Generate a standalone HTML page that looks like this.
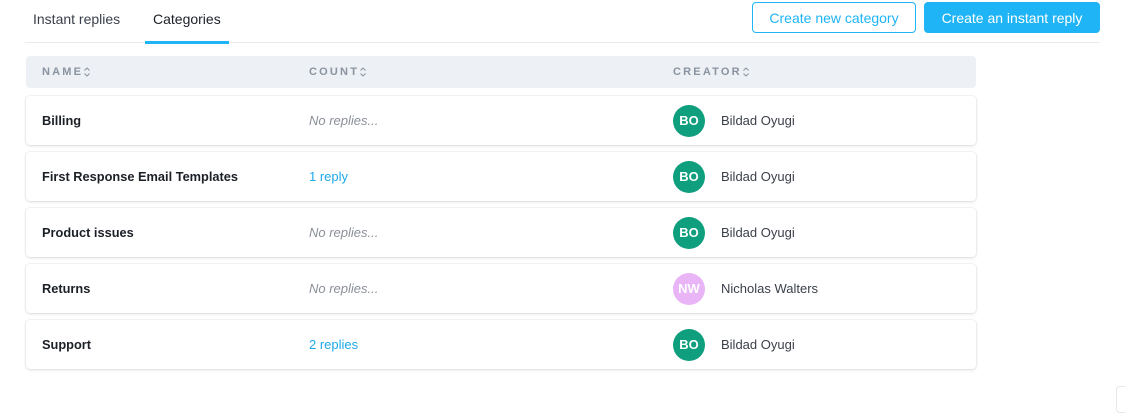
<!DOCTYPE html>
<html><head><style>
body{margin:0;width:1125px;height:405px;background:#fff;font-family:"Liberation Sans",sans-serif;position:relative;overflow:hidden}
.a{position:absolute}
.tab{font-size:14px;color:#3a3f4a;top:11px}
.btn{top:2px;height:31px;border-radius:4px;box-sizing:border-box;font-size:14px;display:flex;align-items:center;justify-content:center}
.hdr{left:26px;top:56px;width:950px;height:32px;background:#edf0f4;border-radius:4px}
.h{font-size:11px;letter-spacing:2.2px;color:#8a93a0;font-weight:bold;top:66px;display:flex;align-items:center}
.h svg{margin-left:0px}
.row{left:26px;width:950px;height:49px;background:#fff;border-radius:4px;box-shadow:0 1px 3px rgba(0,0,0,.12),0 0 0 1px rgba(0,0,0,.03)}
.row div{position:absolute;top:0;line-height:49px;font-size:13px}
.n{left:16px;color:#1b1f26;font-weight:bold;font-size:12.8px!important}
.c{left:283px}
.no{color:#8a8f98;font-style:italic}
.lk{color:#1fa9e8}
.av{left:647px;top:8.5px!important;width:32px;height:32px;border-radius:50%;color:#fff;font-weight:bold;font-size:15px;text-align:center;line-height:32px!important}
.cr{left:695px;color:#3a3f4a}
</style></head><body>
<div class="a tab" style="left:33px">Instant replies</div>
<div class="a tab" style="left:153px;color:#1b1f26">Categories</div>
<div class="a" style="left:25px;top:42px;width:1075px;height:1px;background:#e8ebef"></div>
<div class="a" style="left:145px;top:41px;width:84px;height:3px;background:#1fb4f5"></div>
<div class="a btn" style="left:752px;width:164px;border:1px solid #1fb4f5;color:#1fb4f5">Create new category</div>
<div class="a btn" style="left:924px;width:176px;background:#1fb4f5;color:#fff">Create an instant reply</div>
<div class="a hdr"></div>
<div class="a h" style="left:42px">NAME<svg width="8" height="12" viewBox="0 0 8 12"><path d="M1.5 4.5L4 2L6.5 4.5M1.5 7.5L4 10L6.5 7.5" fill="none" stroke="#8a93a0" stroke-width="1"/></svg></div>
<div class="a h" style="left:309px">COUNT<svg width="8" height="12" viewBox="0 0 8 12"><path d="M1.5 4.5L4 2L6.5 4.5M1.5 7.5L4 10L6.5 7.5" fill="none" stroke="#8a93a0" stroke-width="1"/></svg></div>
<div class="a h" style="left:673px">CREATOR<svg width="8" height="12" viewBox="0 0 8 12"><path d="M1.5 4.5L4 2L6.5 4.5M1.5 7.5L4 10L6.5 7.5" fill="none" stroke="#8a93a0" stroke-width="1"/></svg></div>

<div class="a row" style="top:96px"><div class="n">Billing</div><div class="c no">No replies...</div><div class="av" style="background:#0f9f7f">BO</div><div class="cr">Bildad Oyugi</div></div>
<div class="a row" style="top:152px"><div class="n">First Response Email Templates</div><div class="c lk">1 reply</div><div class="av" style="background:#0f9f7f">BO</div><div class="cr">Bildad Oyugi</div></div>
<div class="a row" style="top:208px"><div class="n">Product issues</div><div class="c no">No replies...</div><div class="av" style="background:#0f9f7f">BO</div><div class="cr">Bildad Oyugi</div></div>
<div class="a row" style="top:264px"><div class="n">Returns</div><div class="c no">No replies...</div><div class="av" style="background:#e9b5f7">NW</div><div class="cr">Nicholas Walters</div></div>
<div class="a row" style="top:320px"><div class="n">Support</div><div class="c lk">2 replies</div><div class="av" style="background:#0f9f7f">BO</div><div class="cr">Bildad Oyugi</div></div>
<div class="a" style="left:1116px;top:386px;width:12px;height:25px;border:1px solid #e5e7ea;border-radius:4px"></div>
</body></html>
